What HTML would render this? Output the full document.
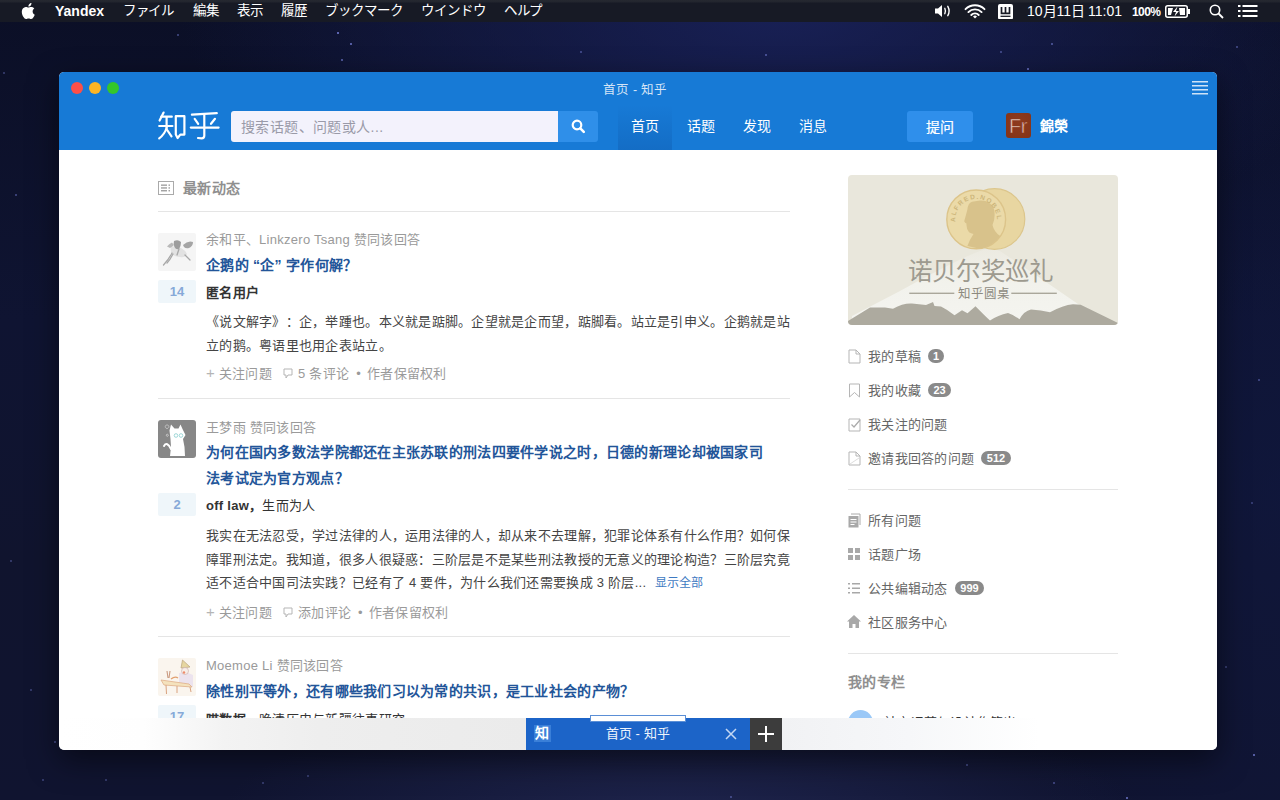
<!DOCTYPE html>
<html lang="zh-CN">
<head>
<meta charset="utf-8">
<style>
*{margin:0;padding:0;box-sizing:border-box}
html,body{width:1280px;height:800px;overflow:hidden}
body{font-family:"Liberation Sans",sans-serif;position:relative;text-spacing-trim:space-all;
 background:radial-gradient(ellipse 600px 260px at 780px 10px,rgba(25,33,88,.95) 0%,rgba(25,33,88,0) 100%),
 radial-gradient(ellipse 460px 130px at 680px 820px,rgba(32,38,80,.9) 0%,rgba(32,38,80,0) 100%),
 radial-gradient(ellipse 300px 500px at 1280px 500px,rgba(16,24,66,.6) 0%,rgba(16,24,66,0) 100%),
 linear-gradient(180deg,#0b0f26 0%,#0f1432 40%,#10142e 70%,#101430 100%);}
.a{position:absolute;white-space:nowrap}
#menubar{position:absolute;left:0;top:0;width:1280px;height:22px;background:linear-gradient(180deg,#252830 0px,#22252e 2px,#171a25 3px,#171a25 100%);color:#fff;font-size:14px}
#menubar .a{top:3px;line-height:16px}
#menubar .jp{font-size:13.5px;letter-spacing:-0.4px}
#win{position:absolute;left:59px;top:72px;width:1158px;height:678px;background:#fff;border-radius:5px;overflow:hidden;
 box-shadow:0 10px 30px rgba(0,0,0,.5)}
#hdr{position:absolute;left:0;top:0;width:1158px;height:78px;background:#177ad6;color:#fff}
.dot{position:absolute;top:10px;width:12px;height:12px;border-radius:6px}
#content{position:absolute;left:0;top:78px;width:1158px;height:600px;color:#333}

.t13{font-size:13px;line-height:20px;letter-spacing:.27px}
.t14{font-size:14px;line-height:20px;letter-spacing:.28px}
.b{font-weight:bold}
.meta{color:#9a9a9a}
.title{color:#225599;line-height:26px}
.body{color:#444;line-height:24px}
.act{color:#9a9a9a}
.plus{color:#b5b5b5;font-size:15px}
.side{color:#666}
.ci{margin:0 5px 0 11px;vertical-align:-1px}
.dt{margin:0 6px 0 7px}
.hr{position:absolute;height:1px;background:#e5e5e5}
.vote{position:absolute;width:38px;height:23px;background:#eff6fa;color:#86a9d8;font-size:13px;line-height:23px;text-align:center;border-radius:2px;font-weight:bold}
.badge{position:absolute;height:14px;border-radius:7px;background:#8a8a8a;color:#fff;font-size:11px;line-height:14px;text-align:center;font-weight:bold}
</style>
</head>
<body>
<div class="a" style="left:177px;top:34px;width:2px;height:2px;border-radius:1px;background:rgba(130,140,235,0.5)"></div><div class="a" style="left:337px;top:32px;width:2px;height:2px;border-radius:1px;background:rgba(130,140,235,0.9)"></div><div class="a" style="left:350px;top:43px;width:2px;height:2px;border-radius:1px;background:rgba(130,140,235,0.8)"></div><div class="a" style="left:341px;top:59px;width:2px;height:2px;border-radius:1px;background:rgba(130,140,235,0.7)"></div><div class="a" style="left:580px;top:51px;width:2px;height:2px;border-radius:1px;background:rgba(130,140,235,0.5)"></div><div class="a" style="left:765px;top:54px;width:2px;height:2px;border-radius:1px;background:rgba(130,140,235,0.6)"></div><div class="a" style="left:1000px;top:51px;width:2px;height:2px;border-radius:1px;background:rgba(130,140,235,0.5)"></div><div class="a" style="left:1051px;top:43px;width:2px;height:2px;border-radius:1px;background:rgba(130,140,235,0.6)"></div><div class="a" style="left:1027px;top:68px;width:2px;height:2px;border-radius:1px;background:rgba(130,140,235,0.8)"></div><div class="a" style="left:1236px;top:46px;width:2px;height:2px;border-radius:1px;background:rgba(130,140,235,0.5)"></div><div class="a" style="left:1225px;top:666px;width:2px;height:2px;border-radius:1px;background:rgba(130,140,235,0.4)"></div><div class="a" style="left:1253px;top:754px;width:2px;height:2px;border-radius:1px;background:rgba(130,140,235,0.8)"></div><div class="a" style="left:966px;top:764px;width:2px;height:2px;border-radius:1px;background:rgba(130,140,235,0.5)"></div><div class="a" style="left:1053px;top:782px;width:2px;height:2px;border-radius:1px;background:rgba(130,140,235,0.5)"></div><div class="a" style="left:1126px;top:797px;width:2px;height:2px;border-radius:1px;background:rgba(130,140,235,0.8)"></div><div class="a" style="left:30px;top:689px;width:2px;height:2px;border-radius:1px;background:rgba(130,140,235,0.4)"></div><div class="a" style="left:54px;top:741px;width:2px;height:2px;border-radius:1px;background:rgba(130,140,235,0.5)"></div><div class="a" style="left:42px;top:779px;width:2px;height:2px;border-radius:1px;background:rgba(130,140,235,0.4)"></div><div class="a" style="left:105px;top:779px;width:2px;height:2px;border-radius:1px;background:rgba(130,140,235,0.4)"></div><div class="a" style="left:262px;top:782px;width:2px;height:2px;border-radius:1px;background:rgba(130,140,235,0.4)"></div><div class="a" style="left:307px;top:775px;width:2px;height:2px;border-radius:1px;background:rgba(130,140,235,0.4)"></div><div class="a" style="left:1258px;top:379px;width:2px;height:2px;border-radius:1px;background:rgba(130,140,235,0.5)"></div><div class="a" style="left:1251px;top:502px;width:2px;height:2px;border-radius:1px;background:rgba(130,140,235,0.4)"></div><div class="a" style="left:3px;top:72px;width:2px;height:2px;border-radius:1px;background:rgba(130,140,235,0.4)"></div><div class="a" style="left:15px;top:194px;width:2px;height:2px;border-radius:1px;background:rgba(130,140,235,0.5)"></div><div class="a" style="left:10px;top:560px;width:2px;height:2px;border-radius:1px;background:rgba(130,140,235,0.4)"></div><div class="a" style="left:730px;top:796px;width:2px;height:2px;border-radius:1px;background:rgba(130,140,235,0.5)"></div>
<div id="menubar">
 <svg class="a" style="left:21px;top:3px" width="14" height="16" viewBox="0 0 14 16"><path fill="#fff" d="M11.6 8.5c0-2 1.6-2.9 1.7-3-.9-1.4-2.4-1.6-2.9-1.6-1.2-.1-2.4.7-3 .7s-1.6-.7-2.6-.7C3.500 4 2.200 4.800 1.500 6c-1.400 2.400-.4 6 1 8 .7 1 1.500 2 2.500 2s1.400-.6 2.600-.6 1.500.6 2.600.6 1.700-1 2.400-2c.8-1.100 1.100-2.200 1.100-2.300 0 0-2.100-.8-2.100-3.200zM9.700 2.500c.5-.7.9-1.600.8-2.500-.8 0-1.800.5-2.300 1.200-.5.600-.9 1.500-.8 2.400.9.100 1.800-.4 2.300-1.100z"/></svg>
 <span class="a" style="left:55px;font-weight:bold">Yandex</span>
 <span class="a jp" style="left:123px">ファイル</span>
 <span class="a jp" style="left:193px">編集</span>
 <span class="a jp" style="left:237px">表示</span>
 <span class="a jp" style="left:281px">履歴</span>
 <span class="a jp" style="left:325px;letter-spacing:0">ブックマーク</span>
 <span class="a jp" style="left:421px;letter-spacing:0">ウインドウ</span>
 <span class="a jp" style="left:504px">ヘルプ</span>
 <!-- volume -->
 <svg class="a" style="left:934px;top:4px" width="19" height="14" viewBox="0 0 19 14"><path fill="#fff" d="M1 4.500h3L8 1v12L4 9.500H1z"/><path fill="none" stroke="#fff" stroke-width="1.400" stroke-linecap="round" d="M10.800 4.300q1.300 2.700 0 5.400M13.800 2.300q2.600 4.700 0 9.400"/></svg>
 <!-- wifi -->
 <svg class="a" style="left:964px;top:3px" width="22" height="16" viewBox="0 0 22 16"><g fill="none" stroke="#fff" stroke-width="1.9" stroke-linecap="round"><path d="M1.500 6.200A13.500 13.500 0 0 1 20.500 6.200"/><path d="M4.400 9.100A9.300 9.300 0 0 1 17.600 9.100"/><path d="M7.300 12A5 5 0 0 1 14.700 12"/></g><path d="M9 13.600L11 15.600L13 13.600A2.800 2.800 0 0 0 9 13.600z" fill="#fff"/></svg>
 <!-- app icon -->
 <svg class="a" style="left:998px;top:3.500px" width="15" height="15.500" viewBox="0 0 15 15.500"><rect x="0" y="0" width="15" height="15.500" rx="2" fill="#fff"/><path fill="none" stroke="#171a25" stroke-width="1.700" d="M3.500 3v6.300H11.500V3M7.500 3v6.300"/><path stroke="#171a25" stroke-width="1.300" d="M2.500 12.300H12.500"/></svg>
 <span class="a" style="left:1027px">10月11日</span>
 <span class="a" style="left:1088px">11:01</span>
 <span class="a" style="left:1132px;font-size:12px;top:4px;letter-spacing:-.6px;font-weight:bold">100%</span>
 <!-- battery -->
 <svg class="a" style="left:1165px;top:5px" width="26" height="13" viewBox="0 0 26 13"><rect x="0.750" y="0.750" width="21.500" height="11.500" rx="2" fill="none" stroke="#fff" stroke-width="1.500"/><rect x="23" y="4" width="2" height="5" fill="#fff"/><path fill="#fff" d="M3 3h5l-2 7H3zM14 3h6v7h-5z"/><path fill="#fff" d="M12.500 1.500L8 7h3l-1.500 4.500L14 6h-3z"/></svg>
 <!-- search -->
 <svg class="a" style="left:1209px;top:4px" width="15" height="15" viewBox="0 0 15 15"><circle cx="6" cy="6" r="4.700" fill="none" stroke="#fff" stroke-width="1.600"/><path stroke="#fff" stroke-width="1.800" d="M9.500 9.500L14 14"/></svg>
 <!-- list -->
 <svg class="a" style="left:1238px;top:4px" width="20" height="14" viewBox="0 0 20 14"><g fill="#fff"><rect x="0" y="1" width="2.500" height="2"/><rect x="0" y="6" width="2.500" height="2"/><rect x="0" y="11" width="2.500" height="2"/><rect x="4.500" y="1" width="15" height="2"/><rect x="4.500" y="6" width="15" height="2"/><rect x="4.500" y="11" width="15" height="2"/></g></svg>
</div>

<div id="win">
 <div id="hdr">
  <div class="dot" style="left:12px;background:#fc4f48"></div>
  <div class="dot" style="left:30px;background:#fdb524"></div>
  <div class="dot" style="left:48px;background:#34c62a"></div>
  <span class="a" style="left:544px;top:10px;font-size:12.5px;line-height:16px;color:#d5e4f6;letter-spacing:.2px">首页 - 知乎</span>
  <svg class="a" style="left:1133px;top:9px" width="16" height="14" viewBox="0 0 16 14"><g fill="#cfe3f7"><rect y="0" width="16" height="1.500"/><rect y="4" width="16" height="1.500"/><rect y="8" width="16" height="1.500"/><rect y="12" width="16" height="1.500"/></g></svg>
  <!-- logo -->
  <svg class="a" style="left:95px;top:34px" width="70" height="40" viewBox="0 0 70 40"><g fill="none" stroke="#fff" stroke-width="2.2" stroke-linecap="round" stroke-linejoin="round">
 <path d="M9.6 6.6L5.6 14.6"/><path d="M7.3 10.7H17.8"/><path d="M5.2 20H18.4"/><path d="M12.6 11V22"/><path d="M12.6 22Q10.5 28.5 5.2 32.3"/><path d="M12.8 23.5L17.5 30.4"/>
 <path d="M21.8 10.2H30.4V28.6H26.3L23.6 32L21.8 28.6Z"/>
 <path d="M37.9 8.6L62.8 7.2"/><path d="M40.7 12.8L44.2 17.8"/><path d="M61 12.8L57 17.8"/><path d="M36.8 21.6H64.6"/><path d="M50.3 9V29.8Q50.3 32.3 47.6 32.3L44 32"/>
</g></svg>
  <!-- search -->
  <div class="a" style="left:172px;top:39px;width:327px;height:31px;background:#f3f2fc;border-radius:3px 0 0 3px"></div>
  <span class="a" style="left:182px;top:46px;font-size:14px;line-height:18px;color:#9a9aa8;letter-spacing:.4px">搜索话题、问题或人...</span>
  <div class="a" style="left:499px;top:39px;width:40px;height:31px;background:#2f8fe9;border-radius:0 3px 3px 0"></div>
  <svg class="a" style="left:512px;top:47px" width="15" height="15" viewBox="0 0 15 15"><circle cx="6" cy="6" r="4.300" fill="none" stroke="#fff" stroke-width="2.200"/><path stroke="#fff" stroke-width="2.600" stroke-linecap="round" d="M9.300 9.300L12.800 12.800"/></svg>
  <!-- nav -->
  <div class="a" style="left:559px;top:33px;width:54px;height:45px;background:linear-gradient(180deg,rgba(0,40,110,0) 0%,rgba(0,40,110,.16) 100%)"></div>
  <span class="a" style="left:572px;top:45px;font-size:14px;line-height:18px">首页</span>
  <span class="a" style="left:628px;top:45px;font-size:14px;line-height:18px">话题</span>
  <span class="a" style="left:684px;top:45px;font-size:14px;line-height:18px">发现</span>
  <span class="a" style="left:740px;top:45px;font-size:14px;line-height:18px">消息</span>
  <div class="a" style="left:848px;top:39px;width:66px;height:31px;background:#2f8feb;border-radius:3px"></div>
  <span class="a" style="left:867px;top:45px;font-size:14px;line-height:20px;letter-spacing:.3px;-webkit-text-stroke:.2px #fff">提问</span>
  <div class="a" style="left:947px;top:41px;width:25px;height:25px;background:radial-gradient(circle at 50% 40%,#8e3b1e 0%,#843318 100%);border-radius:3px"></div>
  <span class="a" style="left:950px;top:43.5px;font-size:20px;line-height:21px;color:#eacbc0;-webkit-text-stroke:0.6px #883619;letter-spacing:-0.5px">Fr</span>
  <span class="a" style="left:981px;top:45px;font-size:14px;line-height:18px;font-weight:bold">錦榮</span>
 </div>
 <div id="content">
 </div>
</div>

<div id="pg">
 <!-- heading -->
 <svg class="a" style="left:158px;top:181px" width="16" height="14" viewBox="0 0 16 14"><rect x="0.5" y="0.5" width="15" height="13" fill="none" stroke="#aaa" stroke-width="1"/><g fill="#999"><rect x="3" y="3.5" width="6" height="1.3"/><rect x="3" y="6.3" width="6" height="1.3"/><rect x="3" y="9.1" width="6" height="1.3"/><rect x="10.5" y="3.5" width="1.5" height="1.3"/><rect x="10.5" y="6.3" width="1.5" height="1.3"/><rect x="10.5" y="9.1" width="1.5" height="1.3"/></g></svg>
 <div class="a t14 b" style="left:183px;top:178px;color:#8f8f8f">最新动态</div>
 <div class="hr" style="left:158px;top:211px;width:632px"></div>

 <!-- item 1 -->
 <svg class="a" style="left:158px;top:233px" width="38" height="38" viewBox="0 0 38 38"><rect width="38" height="38" rx="2" fill="#f5f5f5"/>
 <path d="M13 14Q18 12 23 15Q27 17 29 21Q27 25 22 24Q17 24 14 21Q12 18 13 14z" fill="#e2e2e2"/>
 <path d="M16 8Q20 6 23 9Q23 13 21 16Q18 17 16.5 14Q15 11 16 8z" fill="#9d9d9d"/>
 <path d="M25 12Q30 7 35 9Q35 13 31 15Q28 16 26 14z" fill="#a5a5a5"/>
 <path d="M9 13.5Q11 11 14 9.5L16 12Q14 14 12 15z" fill="#b9b9b9"/>
 <g fill="none" stroke="#a8a8a8" stroke-width="1.3" stroke-linecap="round"><path d="M14 20Q11 26 5.5 32"/><path d="M15 21Q12 27 9 30"/><path d="M27 22L32 27"/><path d="M21 16L19 22"/></g>
</svg>
 <div class="a t13 meta" style="left:206px;top:230px">余和平、Linkzero Tsang 赞同该回答</div>
 <div class="a t14 b title" style="left:206px;top:252px">企鹅的 “企” 字作何解？</div>
 <div class="vote" style="left:158px;top:280px">14</div>
 <div class="a t13 b" style="left:206px;top:283px;color:#333">匿名用户</div>
 <div class="a t13 body" style="left:206px;top:310px">《说文解字》：企，举踵也。本义就是踮脚。企望就是企而望，踮脚看。站立是引申义。企鹅就是站<br>立的鹅。粤语里也用企表站立。</div>
 <div class="a t13 act" style="left:206px;top:363px"><span class="plus">+</span> 关注问题<svg class="ci" width="10" height="11" viewBox="0 0 10 11"><path d="M1 1h8v6H5l-2 3V7H1z" fill="none" stroke="#b5b5b5" stroke-width="1"/></svg>5 条评论<span class="dt">•</span>作者保留权利</div>
 <div class="hr" style="left:158px;top:398px;width:632px"></div>

 <!-- item 2 -->
 <svg class="a" style="left:158px;top:420px" width="38" height="38" viewBox="0 0 38 38"><rect width="38" height="38" rx="3" fill="#878787"/>
 <path d="M12.5 19L11.5 10.5L13 4.5L16.5 8.5L20.5 8.5L22.5 4.5L24.5 9L27.5 15L25 19L26.5 27L27 36L12 36L13 27Z" fill="#fff"/>
 <path d="M13 29Q9 21 6 26" fill="none" stroke="#fff" stroke-width="2" stroke-linecap="round"/>
 <g fill="none" stroke="#9fd8d8" stroke-width="1"><circle cx="18" cy="15.5" r="1.8"/><circle cx="23" cy="15.5" r="1.8"/></g>
 <path d="M9 8.5a1.8 1.8 0 1 1 .1 0M8 15l1.5-1 1 1.5-1.5 1z" fill="none" stroke="#ccc" stroke-width=".8"/>
</svg>
 <div class="a t13 meta" style="left:206px;top:418px">王梦雨 赞同该回答</div>
 <div class="a t14 b title" style="left:206px;top:440px;line-height:25.6px">为何在国内多数法学院都还在主张苏联的刑法四要件学说之时，日德的新理论却被国家司<br>法考试定为官方观点？</div>
 <div class="vote" style="left:158px;top:493px">2</div>
 <div class="a t13" style="left:206px;top:496px;color:#333"><b style="color:#333">off law，</b>生而为人</div>
 <div class="a t13 body" style="left:206px;top:524px;line-height:23.6px">我实在无法忍受，学过法律的人，运用法律的人，却从来不去理解，犯罪论体系有什么作用？如何保<br>障罪刑法定。我知道，很多人很疑惑：三阶层是不是某些刑法教授的无意义的理论构造？三阶层究竟<br>适不适合中国司法实践？已经有了 4 要件，为什么我们还需要换成 3 阶层... <span style="color:#3e7ac2;font-size:12px;letter-spacing:0;margin-left:5px">显示全部</span></div>
 <div class="a t13 act" style="left:206px;top:602px"><span class="plus">+</span> 关注问题<svg class="ci" width="10" height="11" viewBox="0 0 10 11"><path d="M1 1h8v6H5l-2 3V7H1z" fill="none" stroke="#b5b5b5" stroke-width="1"/></svg>添加评论<span class="dt">•</span>作者保留权利</div>
 <div class="hr" style="left:158px;top:636px;width:632px"></div>

 <!-- item 3 -->
 <svg class="a" style="left:158px;top:658px" width="38" height="38" viewBox="0 0 38 38"><rect width="38" height="38" rx="2" fill="#faf5ee"/>
 <path d="M21 15Q28 13 35 17L35 29L21 28Z" fill="#ece3ee"/>
 <path d="M24.5 2L32 9L23 10Z" fill="#e6d6a0" stroke="#b9a27a" stroke-width=".7"/>
 <circle cx="27" cy="13" r="3.5" fill="#f7eee8" stroke="#c9a9a9" stroke-width=".6"/>
 <circle cx="26" cy="14.5" r="1.2" fill="#ee8a6a"/>
 <path d="M3 22L31 26L34 29L6 27Z" fill="#f4e2bd" stroke="#e0b08a" stroke-width=".8"/>
 <path d="M8 27L8.5 36M32 29L33 34M19 28L19 35" stroke="#d9a27e" stroke-width="1" fill="none"/>
 <path d="M9 13L10 20M12 13L11 20" stroke="#c99a80" stroke-width="1.1" fill="none"/>
 <path d="M13 21Q17 18 20 20" stroke="#e2a070" stroke-width="1.3" fill="none"/>
</svg>
 <div class="a t13 meta" style="left:206px;top:656px">Moemoe Li 赞同该回答</div>
 <div class="a t14 b title" style="left:206px;top:678px">除性别平等外，还有哪些我们习以为常的共识，是工业社会的产物？</div>
 <div class="vote" style="left:158px;top:705px">17</div>
 <div class="a t13" style="left:206px;top:710px;color:#333"><b style="color:#333">喵数据，</b>晚清历史与新疆往事研究</div>

 <!-- sidebar -->
 <div class="a" id="banner" style="left:848px;top:175px;width:270px;height:150px;border-radius:4px;overflow:hidden;background:#e9e7dc">
  <svg width="270" height="150" viewBox="0 0 270 150">
   <defs>
    <linearGradient id="snow" x1="0" y1="0" x2="0" y2="1"><stop offset="0" stop-color="#eceae1"/><stop offset="0.45" stop-color="#f2f2ec"/><stop offset="1" stop-color="#f4f4f0"/></linearGradient>
    <clipPath id="fc"><circle cx="128.2" cy="44.4" r="29.2"/></clipPath>
   </defs>
   <path d="M4 141L52 116Q110 84 132 76Q142 72 152 76Q170 88 197.6 106.7L246 140L246 150L4 150z" fill="url(#snow)"/>
   
   <path d="M0 146L22 132.5L37 132.5L45 133.7Q55 128 64 128.5L78 130L84 127.5L85 127L86.5 131L93 131.5Q100 135 106.5 140.2L114 135.3L119.5 138.2L127.5 131.3Q136 140 142 145.6Q150 140 160 138Q166 140 171.5 144.3Q176 136 183 134.5Q193 135 202 137.3Q215 130 225 129.2L232.7 129.7L270 148V150H0z" fill="#adaa9f"/>
   <circle cx="146.5" cy="44" r="30.3" fill="#e8d6a1" stroke="#dcc68c" stroke-width="1.2"/>
   
   <circle cx="128.2" cy="44.4" r="29.4" fill="#ebdaa8" stroke="#dcc48a" stroke-width="1.4"/>
   <g clip-path="url(#fc)"><path d="M124 26.7Q120 28 119.4 34.5Q118 40 116.2 46.3Q117 48 118.5 48.5Q118 53 121 57.3Q123 58.5 125.5 59Q122 64 119.4 71L142 76Q150 68 152.2 61Q146 57 144.5 50Q148 42 145.8 33.5Q142 25 132 25.5z" fill="#d8c28b"/></g>
   <path id="arc" d="M107.3 47.0A21 21 0 1 1 149.1 47.0" fill="none"/>
   <text font-size="6.5" fill="#cdb67b" font-family="Liberation Sans" font-weight="bold"><textPath href="#arc" textLength="67" lengthAdjust="spacing">ALFRED.NOBEL</textPath></text>
   <rect x="61.3" y="117.6" width="45" height="1.4" fill="#aaa79b"/>
   <rect x="163.3" y="117.6" width="45.5" height="1.4" fill="#aaa79b"/>
  </svg>
  <div class="a" style="left:60px;top:82px;font-size:24.5px;line-height:30px;color:#9d9a8f;letter-spacing:0.2px;font-weight:300">诺贝尔奖巡礼</div>
  <div class="a" style="left:110px;top:111px;font-size:12.5px;line-height:16px;color:#8d8a7f;font-weight:500">知乎圆桌</div>
 </div>
 </div>

 <svg class="a" style="left:848px;top:349px" width="13" height="15" viewBox="0 0 13 15"><path d="M1 1h7l4 4v9H1z M8 1v4h4" fill="none" stroke="#b5b5b5" stroke-width="1"/></svg>
 <div class="a t13 side" style="left:868px;top:347px">我的草稿</div>
 <div class="badge" style="left:928px;top:349px;width:16px">1</div>
 <svg class="a" style="left:848px;top:383px" width="13" height="15" viewBox="0 0 13 15"><path d="M1.5 1h10v13l-5-4.5l-5 4.5z" fill="none" stroke="#b5b5b5" stroke-width="1"/></svg>
 <div class="a t13 side" style="left:868px;top:381px">我的收藏</div>
 <div class="badge" style="left:928px;top:383px;width:23px">23</div>
 <svg class="a" style="left:848px;top:417px" width="13" height="15" viewBox="0 0 13 15"><path d="M1 2h11v12H1z" fill="none" stroke="#b5b5b5" stroke-width="1"/><path d="M3.5 7.5l2.5 2.5l6-7" fill="none" stroke="#aaa" stroke-width="1.2"/></svg>
 <div class="a t13 side" style="left:868px;top:415px">我关注的问题</div>
 <svg class="a" style="left:848px;top:451px" width="13" height="15" viewBox="0 0 13 15"><path d="M1 1h7l4 4v9H1z M8 1v4h4" fill="none" stroke="#b5b5b5" stroke-width="1"/><path d="M2 13l9-6" stroke="#ddd" stroke-width="1"/></svg>
 <div class="a t13 side" style="left:868px;top:449px">邀请我回答的问题</div>
 <div class="badge" style="left:981px;top:451px;width:30px">512</div>
 <div class="hr" style="left:848px;top:489px;width:270px"></div>

 <svg class="a" style="left:848px;top:513px" width="13" height="15" viewBox="0 0 13 15"><path d="M3 1h9v11" fill="none" stroke="#aaa" stroke-width="1"/><rect x="0.5" y="3" width="10" height="11.5" fill="#a8a8a8"/><g fill="#fff"><rect x="2.5" y="6" width="6" height="1"/><rect x="2.5" y="8.5" width="6" height="1"/><rect x="2.5" y="11" width="4" height="1"/></g></svg>
 <div class="a t13 side" style="left:868px;top:511px">所有问题</div>
 <svg class="a" style="left:848px;top:548px" width="13" height="13" viewBox="0 0 13 13"><g fill="#a8a8a8"><rect x="0" y="0" width="5" height="5"/><rect x="7" y="0" width="5" height="5"/><rect x="0" y="7" width="5" height="5"/><rect x="7" y="7" width="5" height="5"/></g></svg>
 <div class="a t13 side" style="left:868px;top:545px">话题广场</div>
 <svg class="a" style="left:848px;top:583px" width="13" height="11" viewBox="0 0 13 11"><g fill="#a8a8a8"><rect x="0" y="0" width="2" height="1.5"/><rect x="0" y="4.5" width="2" height="1.5"/><rect x="0" y="9" width="2" height="1.5"/><rect x="4" y="0" width="8" height="1.5"/><rect x="4" y="4.5" width="8" height="1.5"/><rect x="4" y="9" width="8" height="1.5"/></g></svg>
 <div class="a t13 side" style="left:868px;top:579px">公共编辑动态</div>
 <div class="badge" style="left:955px;top:581px;width:29px">999</div>
 <svg class="a" style="left:847px;top:615px" width="14" height="13" viewBox="0 0 14 13"><path d="M7 0l7 6.5h-2V13H8.5V9h-3v4H2V6.5H0z" fill="#a8a8a8"/></svg>
 <div class="a t13 side" style="left:868px;top:613px">社区服务中心</div>
 <div class="hr" style="left:848px;top:653px;width:270px"></div>
 <div class="a t14 b" style="left:848px;top:672px;color:#8f8f8f">我的专栏</div>
 <div class="a" style="left:848px;top:710px;width:25px;height:25px;border-radius:13px;background:#9ac8f7"></div>
 <div class="a t13" style="left:884px;top:713px;color:#333">社交运营与设计作笔出</div>
</div>

<!-- bottom overlay -->
<div class="a" style="left:59px;top:718px;width:1158px;height:32px;border-radius:0 0 6px 6px;background:linear-gradient(90deg,#fff 0px,#fefefe 85px,#f3f3f3 165px,#eeeeee 260px,#ebebeb 467px,#f1f2f4 723px,#f6f7f9 850px,#fff 980px)"></div>
<div class="a" style="left:526px;top:718px;width:224px;height:32px;background:#1c64c8"></div>
<div class="a" style="left:750px;top:718px;width:32px;height:32px;background:#3c3c3c"></div>
<svg class="a" style="left:757px;top:725px" width="18" height="18" viewBox="0 0 18 18"><path d="M9 1v16M1 9h16" stroke="#fff" stroke-width="2"/></svg>
<div class="a" style="left:590px;top:715px;width:96px;height:7px;background:#fff;border:1px solid #5b8fd6"></div>
<div class="a" style="left:534px;top:725px;width:17px;height:17px;background:#3a7fd8"></div>
<div class="a" style="left:535px;top:725px;font-size:14px;line-height:17px;color:#fff;font-weight:bold">知</div>
<div class="a" style="left:606px;top:725px;font-size:13px;line-height:17px;color:#eef4fc">首页 - 知乎</div>
<svg class="a" style="left:725px;top:728px" width="12" height="12" viewBox="0 0 12 12"><path d="M1 1l10 10M11 1L1 11" stroke="#c4d8f4" stroke-width="1.5"/></svg>
</body>
</html>
